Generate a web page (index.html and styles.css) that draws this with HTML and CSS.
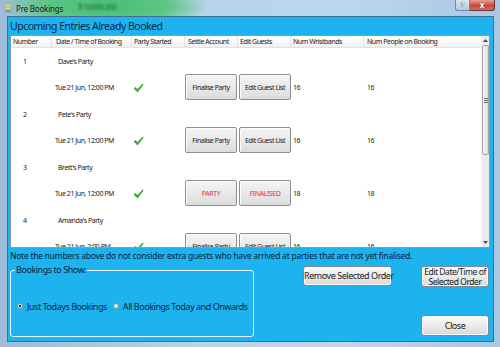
FILE: index.html
```html
<!DOCTYPE html>
<html>
<head>
<meta charset="utf-8">
<title>Pre Bookings</title>
<link rel="stylesheet" href="styles.css">
</head>
<body>
<div class="window">
  <div class="titlebar">
    <span class="glass"></span>
    <span class="glass-text">$1000.00</span>
    <svg class="app-icon" viewBox="0 0 10 10" width="10" height="10">
      <circle cx="5" cy="4" r="3.2" fill="#f4e7a0" stroke="#b59a3a" stroke-width="0.8"/>
      <path d="M2 8.5h6" stroke="#5a8fc4" stroke-width="1.4"/>
      <path d="M5 1.5v5M2.5 4h5" stroke="#7aa8d8" stroke-width="0.8"/>
    </svg>
    <span class="title">Pre Bookings</span>
    <div class="controls">
      <span class="help">?</span>
      <span class="close">x</span>
    </div>
  </div>

  <div class="client">
    <div class="heading">Upcoming Entries Already Booked</div>

    <div class="grid">
      <div class="table">
        <div class="thead">
          <span class="th">Number</span>
          <span class="th th-date">Date / Time of Booking</span>
          <span class="th">Party Started</span>
          <span class="th th-settle">Settle Account</span>
          <span class="th">Edit Guests</span>
          <span class="th">Num Wristbands</span>
          <span class="th th-people">Num People on Booking</span>
        </div>
        <div class="rows">
          <div class="row">
            <span class="c-num">1</span><span class="c-name">Dave's Party</span>
            <span></span><span class="c-date">Tue 21 Jun, 12:00 PM</span>
            <span class="c-check"><svg class="tick" viewBox="0 0 11 10" width="11" height="10"><path d="M0.6 5.4 2.6 3.9 4.4 6.1 9.6 0.6 10.6 1.5 4.6 9.4Z"/></svg></span>
            <span class="c-btn"><button class="cell-btn">Finalise Party</button></span>
            <span class="c-btn c-btn2"><button class="cell-btn">Edit Guest List</button></span>
            <span class="c-wrist">16</span><span class="c-people">16</span>
          </div>
          <div class="row">
            <span class="c-num">2</span><span class="c-name">Pete's Party</span>
            <span></span><span class="c-date">Tue 21 Jun, 12:00 PM</span>
            <span class="c-check"><svg class="tick" viewBox="0 0 11 10" width="11" height="10"><path d="M0.6 5.4 2.6 3.9 4.4 6.1 9.6 0.6 10.6 1.5 4.6 9.4Z"/></svg></span>
            <span class="c-btn"><button class="cell-btn">Finalise Party</button></span>
            <span class="c-btn c-btn2"><button class="cell-btn">Edit Guest List</button></span>
            <span class="c-wrist">16</span><span class="c-people">16</span>
          </div>
          <div class="row">
            <span class="c-num">3</span><span class="c-name">Brett's Party</span>
            <span></span><span class="c-date">Tue 21 Jun, 12:00 PM</span>
            <span class="c-check"><svg class="tick" viewBox="0 0 11 10" width="11" height="10"><path d="M0.6 5.4 2.6 3.9 4.4 6.1 9.6 0.6 10.6 1.5 4.6 9.4Z"/></svg></span>
            <span class="c-btn"><button class="cell-btn red">PARTY</button></span>
            <span class="c-btn c-btn2"><button class="cell-btn red">FINALISED</button></span>
            <span class="c-wrist">18</span><span class="c-people">18</span>
          </div>
          <div class="row">
            <span class="c-num">4</span><span class="c-name">Amanda's Party</span>
            <span></span><span class="c-date">Tue 21 Jun, 2:00 PM</span>
            <span class="c-check"><svg class="tick" viewBox="0 0 11 10" width="11" height="10"><path d="M0.6 5.4 2.6 3.9 4.4 6.1 9.6 0.6 10.6 1.5 4.6 9.4Z"/></svg></span>
            <span class="c-btn"><button class="cell-btn">Finalise Party</button></span>
            <span class="c-btn c-btn2"><button class="cell-btn">Edit Guest List</button></span>
            <span class="c-wrist">16</span><span class="c-people">16</span>
          </div>
        </div>
      </div>
      <div class="scrollbar">
        <span class="sb-arrow"><svg viewBox="0 0 5 3" width="5" height="3"><path d="M0 3 2.5 0 5 3Z" fill="#4a4a4a"/></svg></span>
        <span class="sb-thumb"><span class="grip"></span></span>
        <span class="sb-track"></span>
        <span class="sb-arrow"><svg viewBox="0 0 5 3" width="5" height="3"><path d="M0 0 2.5 3 5 0Z" fill="#4a4a4a"/></svg></span>
      </div>
    </div>

    <div class="note">Note the numbers above do not consider extra guests who have arrived at parties that are not yet finalised.</div>

    <div class="bottom">
      <fieldset class="group">
        <legend>Bookings to Show:</legend>
        <div class="radios">
          <label class="opt"><input type="radio" name="show" checked> Just Todays Bookings</label>
          <label class="opt"><input type="radio" name="show"> All Bookings Today and Onwards</label>
        </div>
      </fieldset>
      <button class="btn btn-remove">Remove Selected Order</button>
      <button class="btn btn-edit"><span class="ln">Edit Date/Time of</span><span class="ln">Selected Order</span></button>
      <button class="btn btn-close">Close</button>
    </div>
  </div>
</div>
</body>
</html>
```

FILE: styles.css
```css
* { box-sizing: border-box; }
html, body { margin: 0; padding: 0; }
body {
  width: 500px;
  height: 347px;
  overflow: hidden;
  font-family: "Noto Sans", "Open Sans", sans-serif;
  background: #a9c6e0;
}

.window {
  width: 500px;
  height: 347px;
  display: flex;
  flex-direction: column;
  background: linear-gradient(90deg, #9dbcd8 0%, #b9d4ea 40%, #bcd6ec 70%, #aac7e2 100%);
  overflow: hidden;
}

/* ---------- title bar ---------- */
.titlebar {
  position: relative;
  height: 16px;
  flex: none;
  display: flex;
  align-items: center;
  padding-left: 3px;
  overflow: hidden;
}
.glass {
  position: absolute;
  left: 5px;
  top: -18px;
  width: 200px;
  height: 48px;
  border-radius: 50%;
  background: radial-gradient(ellipse at center, #46bd76 0%, #5ec686 45%, rgba(188, 214, 236, 0) 74%);
}
.glass-text {
  position: absolute;
  left: 78px;
  top: 0;
  font-size: 9px;
  font-weight: 700;
  color: #1d5a33;
  filter: blur(1.3px);
  opacity: .6;
}
.app-icon { position: relative; flex: none; }
.title {
  position: relative;
  margin-left: 3px;
  font-size: 8px;
  color: #1b1b1b;
  letter-spacing: -0.2px;
}
.controls {
  position: relative;
  margin-left: auto;
  margin-right: 5px;
  align-self: flex-start;
  display: flex;
}
.help {
  width: 15px;
  height: 11px;
  border: 1px solid #6f86a0;
  border-top: none;
  border-radius: 0 0 0 3px;
  background: linear-gradient(#dce9f5, #b3cae0);
  color: #fff;
  font-size: 7px;
  font-weight: 700;
  line-height: 10px;
  text-align: center;
  text-shadow: 0 0 1px #2a3b55, 0 0 1px #2a3b55;
}
.close {
  width: 25px;
  height: 11px;
  border: 1px solid #6e3434;
  border-top: none;
  border-left: none;
  border-radius: 0 0 3px 0;
  background: linear-gradient(#e8a294, #c8483a 55%, #d46a5c);
  color: #fff;
  font-size: 8px;
  font-weight: 700;
  line-height: 9px;
  text-align: center;
  text-shadow: 0 0 1px #5a1a1a;
}

/* ---------- client area ---------- */
.client {
  flex: 1;
  margin: 0 6px 5px 7px;
  background: #1db3ef;
  border: 1px solid #3f6f95;
  display: flex;
  flex-direction: column;
  padding: 0 3px 0 2px;
  color: #0c2340;
}
.heading {
  height: 18px;
  flex: none;
  padding-top: 4px;
  font-size: 10.5px;
  line-height: 11px;
  letter-spacing: -0.5px;
  color: #0d2546;
}

/* ---------- data grid ---------- */
.grid {
  height: 213px;
  flex: none;
  display: flex;
  background: #fff;
  border: 1px solid #7f9db9;
}
.table {
  flex: 1;
  display: flex;
  flex-direction: column;
  overflow: hidden;
}
.thead, .row {
  display: grid;
  grid-template-columns: 41px 80px 53px 53px 53px 73px 1fr;
}
.thead {
  height: 12px;
  flex: none;
  background: linear-gradient(#ffffff, #f1f1f1);
  border-bottom: 1px solid #e2e2e2;
}
.th {
  font-size: 7px;
  line-height: 11px;
  padding-left: 2px;
  color: #222;
  border-right: 1px solid #e4e4e4;
  white-space: nowrap;
  letter-spacing: -0.45px;
}
.th-date { padding-left: 4px; }
.th-settle { padding-left: 3px; }
.th-people { padding-left: 3px; border-right: none; }

.rows { flex: 1; overflow: hidden; }
.row {
  grid-template-rows: 26px 27px;
  height: 53px;
  font-size: 7px;
  color: #1a1a1a;
  letter-spacing: -0.45px;
}
.row > span {
  display: flex;
  align-items: center;
  white-space: nowrap;
}
.c-num { padding-left: 12px; }
.c-name { padding-left: 6px; grid-column: 2 / span 6; }
.c-date { padding-left: 3px; }
.c-check { padding-left: 1px; }
.c-btn2 { padding-left: 1px; }
.c-btn { align-items: flex-start !important; }
.c-wrist { padding-left: 2px; }
.c-people { padding-left: 3px; }

.tick { fill: #45a83a; }

.cell-btn {
  width: 52px;
  height: 26px;
  padding: 0;
  border: 1px solid #8e8e8e;
  border-radius: 2px;
  background: linear-gradient(#f4f4f4, #e9e9e9 50%, #dcdcdc);
  box-shadow: inset 1px 1px 0 #fdfdfd;
  font-family: "Noto Sans", "Open Sans", sans-serif;
  font-size: 7px;
  letter-spacing: -0.45px;
  color: #222;
  white-space: nowrap;
}
.cell-btn.red { color: #e2323e; }

/* ---------- scrollbar ---------- */
.scrollbar {
  width: 8px;
  flex: none;
  display: flex;
  flex-direction: column;
  background: #ebebeb;
  border-left: 1px solid #f7f7f7;
}
.sb-arrow {
  height: 9px;
  flex: none;
  display: flex;
  align-items: center;
  justify-content: center;
}
.sb-thumb {
  height: 110px;
  flex: none;
  border: 1px solid #a3a3a3;
  border-radius: 2px;
  background: linear-gradient(90deg, #f5f5f5, #dedede);
  display: flex;
  align-items: center;
  justify-content: center;
}
.grip {
  width: 4px;
  height: 5px;
  background: repeating-linear-gradient(#6a6a6a 0 1px, transparent 1px 2px);
}
.sb-track { flex: 1; }

/* ---------- note ---------- */
.note {
  height: 15px;
  flex: none;
  font-size: 8.5px;
  line-height: 15px;
  letter-spacing: -0.24px;
  white-space: nowrap;
  color: #0c2340;
}

/* ---------- bottom area ---------- */
.bottom {
  flex: 1;
  display: grid;
  grid-template-columns: 244px 49px 89px 29px 68px;
  grid-template-rows: 21px 28px 21px;
  padding-top: 3px;
}
.group {
  grid-column: 1;
  grid-row: 1 / span 3;
  margin: -2px 0 0;
  padding: 0;
  height: 73px;
  border: 1px solid #eaf6ff;
  border-radius: 3px;
  min-width: 0;
}
.group legend {
  margin-left: 4px;
  padding: 0 1px;
  font-size: 9px;
  line-height: 12px;
  letter-spacing: -0.45px;
  color: #0c2340;
}
.radios {
  height: 60px;
  display: flex;
  align-items: center;
  padding-left: 6px;
  gap: 6px;
  font-size: 9px;
  letter-spacing: -0.45px;
  color: #0c2340;
}
.opt {
  display: flex;
  align-items: center;
  gap: 4px;
  white-space: nowrap;
}
.opt input {
  appearance: none;
  -webkit-appearance: none;
  margin: 0;
  width: 6px;
  height: 6px;
  border-radius: 50%;
  border: 1px solid #8a98a6;
  background: radial-gradient(circle, #f4f4f4, #d8d8d8);
}
.opt input:checked {
  background: radial-gradient(circle, #1b2a3a 0 1.4px, #f2f2f2 1.6px);
}

.btn {
  padding: 0;
  border: 1px solid #7b8a99;
  border-radius: 3px;
  background: linear-gradient(#fbfbfb, #ececec 50%, #d8d8d8);
  box-shadow: inset 0 0 0 1px #fdfdfd;
  font-family: "Noto Sans", "Open Sans", sans-serif;
  font-size: 9px;
  line-height: 10px;
  letter-spacing: -0.45px;
  color: #1a1a1a;
  white-space: nowrap;
}
.btn-remove { grid-column: 3; grid-row: 1; height: 20px; }
.btn-edit {
  grid-column: 5;
  grid-row: 1;
  height: 21px;
  display: flex;
  flex-direction: column;
  align-items: center;
  justify-content: center;
  font-size: 8.5px;
  line-height: 9.5px;
}
.btn-edit .ln { display: block; height: 9.5px; }
.btn-close { grid-column: 5; grid-row: 3; height: 21px; }
```
